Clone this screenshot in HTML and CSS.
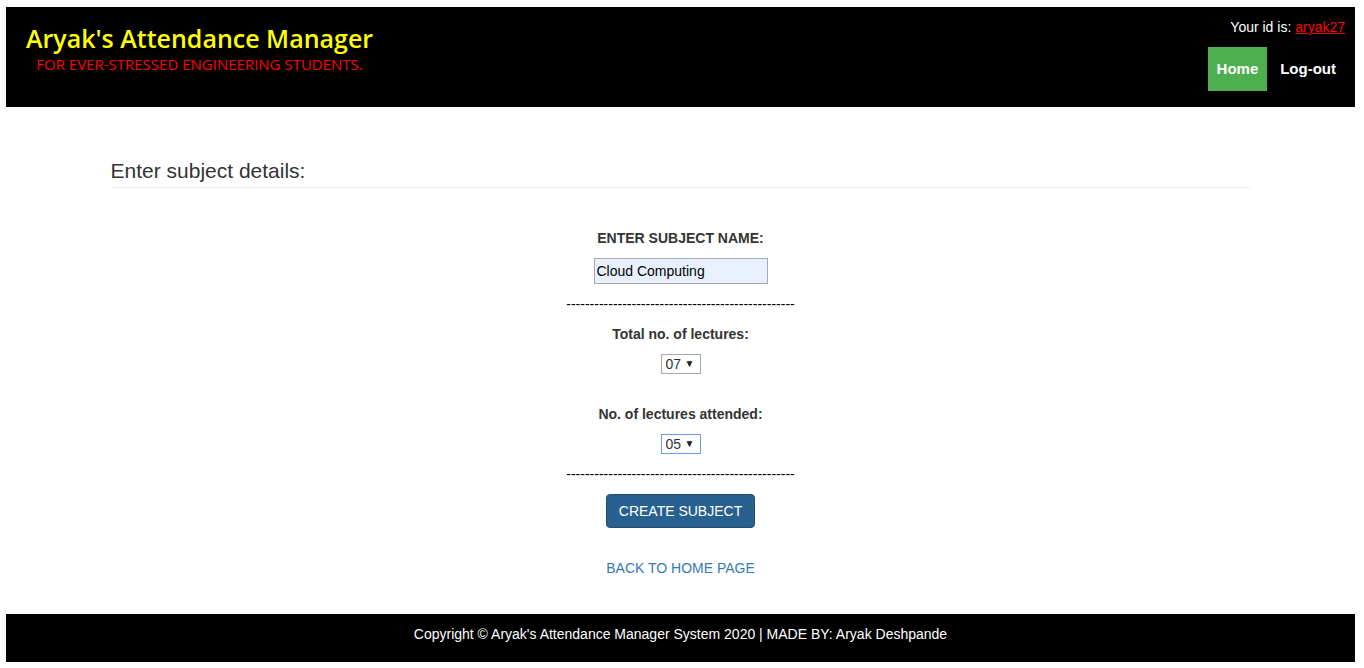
FILE: index.html
```html
<html>
  <head>
    <title>Aryak's Attendance Manager</title>
    <link rel="stylesheet" href="styles.css">
  </head>

  <body>
    <div class="header">
      <div class="brand">
        <div class="brand-title">Aryak's Attendance Manager</div>
        <div class="brand-sub">FOR EVER-STRESSED ENGINEERING STUDENTS.</div>
      </div>
      <div class="user-box">
        <div class="user-id">Your id is: <a href="#">aryak27</a></div>
        <div class="nav">
          <a class="nav-link active" href="#">Home</a>
          <a class="nav-link" href="#">Log-out</a>
        </div>
      </div>
    </div>

    <div class="container">
      <h2 class="page-header">Enter subject details:</h2>

      <form class="subject-form" method="post">
        <label for="subject_name">ENTER SUBJECT NAME:</label>
        <input type="text" name="subject_name" id="subject_name" value="Cloud Computing" />
        <div class="dashes">-------------------------------------------------</div>

        <label for="total">Total no. of lectures:</label>
        <span class="select-wrap">
          <select name="total" id="total">
            <option>07</option>
          </select>
        </span>

        <label class="spaced" for="attended">No. of lectures attended:</label>
        <span class="select-wrap">
          <select class="focused" name="attended" id="attended">
            <option>05</option>
          </select>
        </span>
        <div class="dashes">-------------------------------------------------</div>

        <button class="btn-create" type="submit">CREATE SUBJECT</button>
        <a class="back-link" href="#">BACK TO HOME PAGE</a>
      </form>
    </div>

    <div class="footer">
      Copyright &copy; Aryak's Attendance Manager System 2020 | MADE BY: Aryak Deshpande
    </div>
  </body>
</html>
```

FILE: styles.css
```css
body {
  margin: 7px 9px 6px 6px;
  font-family: "Liberation Sans", Arial, sans-serif;
  font-size: 14px;
  line-height: 20px;
  color: #333;
  background: #fff;
}

.header {
  display: flex;
  justify-content: space-between;
  height: 100px;
  background: #000;
}

.brand {
  padding: 16px 0 0 20px;
  text-align: center;
  font-family: "Open Sans", sans-serif;
}

.brand-title {
  font-size: 25px;
  line-height: 30px;
  font-weight: 600;
  color: #ffff00;
}

.brand-sub {
  margin-top: 2px;
  font-size: 15px;
  line-height: 18px;
  color: #f00;
}

.user-box {
  padding: 10px 10px 0 0;
  text-align: right;
  color: #fff;
}

.user-id a {
  color: #f00;
}

.nav {
  margin-top: 10px;
}

.nav-link {
  display: inline-block;
  padding: 0 9px;
  line-height: 44px;
  font-size: 15px;
  font-weight: bold;
  color: #fff;
  text-decoration: none;
}

.nav-link.active {
  background: #4caf50;
}

.container {
  width: 1140px;
  margin: 0 auto;
  padding: 0 15px;
}

.page-header {
  margin: 52px 0 0;
  padding-bottom: 4px;
  border-bottom: 1px solid #eee;
  font-size: 21px;
  line-height: 24px;
  font-weight: normal;
}

.subject-form {
  display: flex;
  flex-direction: column;
  align-items: center;
  padding-top: 40px;
}

.subject-form label {
  font-weight: bold;
}

.subject-form label.spaced {
  margin-top: 30px;
}

.subject-form input {
  margin-top: 10px;
  width: 174px;
  height: 26px;
  box-sizing: border-box;
  padding: 0 2px;
  border: 1px solid #a9a9a9;
  background: #e8f0fe;
  font: 14px "Liberation Sans", Arial, sans-serif;
  color: #000;
}

.dashes {
  margin: 10px 0;
  color: #000;
}

.select-wrap {
  position: relative;
  margin-top: 10px;
}

.select-wrap select {
  appearance: none;
  width: 40px;
  height: 20px;
  box-sizing: border-box;
  padding: 0 0 0 4px;
  border: 1px solid #a9a9a9;
  border-radius: 0;
  background: #fff;
  font: 14px "Liberation Sans", Arial, sans-serif;
  color: #333;
}

.select-wrap select.focused {
  border-color: #6d9ee6;
  outline: none;
}

.select-wrap::after {
  /* small arrow glyph over the select */
  content: "\25BC";
  position: absolute;
  right: 6px;
  top: 2px;
  font-size: 10px;
  line-height: 16px;
  color: #222;
  pointer-events: none;
}

.btn-create {
  width: 149px;
  height: 34px;
  border: 1px solid #204d74;
  border-radius: 4px;
  background: #286090;
  color: #fff;
  font: 14px "Liberation Sans", Arial, sans-serif;
}

.back-link {
  margin-top: 30px;
  color: #337ab7;
  text-decoration: none;
}

.footer {
  margin-top: 36px;
  height: 48px;
  box-sizing: border-box;
  padding-top: 10px;
  background: #000;
  color: #fff;
  text-align: center;
}
```
